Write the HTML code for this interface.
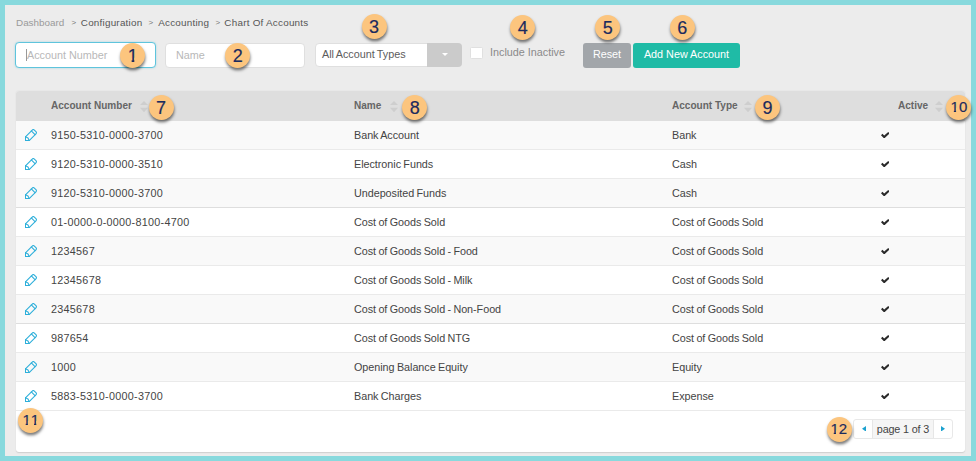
<!DOCTYPE html>
<html lang="en">
<head>
<meta charset="utf-8">
<title>Chart Of Accounts</title>
<style>
*{box-sizing:border-box}
html,body{margin:0;padding:0}
body{width:976px;height:461px;overflow:hidden;position:relative;background:#88d9dd;font-family:"Liberation Sans",sans-serif;font-size:10.8px;color:#444}
.page{position:absolute;left:5px;top:5px;width:966px;height:451px;background:#ececec}
.abs{position:absolute;white-space:nowrap}
.crumb{left:16px;top:16px;height:14px;line-height:14px;font-size:9.9px;color:#555}
.crumb .first{color:#9a9a9a}
.crumb span{position:absolute;top:0}
.crumb .sep{color:#777;font-size:8px}
.inp{height:25px;border:1px solid #dfdfdf;border-radius:4px;background:#fff;line-height:23px;padding-left:10px;color:#b8b8b8;top:42.5px}
.inp.focus{border-color:#5ec4dc;box-shadow:0 0 2px rgba(94,196,220,.55);top:42px;height:26px;line-height:24px;padding-left:11px}
.caret{position:absolute;left:9.5px;top:6px;width:1.4px;height:12.4px;background:#999}
.sel{left:315px;top:42.5px;width:146.8px;height:24.5px;border-radius:4px;background:#fff;border:1px solid #dfdfdf;line-height:21.5px;padding-left:6px;color:#5c5c5c;word-spacing:-.7px}
.sel .arrow{position:absolute;right:-1px;top:-1px;width:34.5px;height:24.5px;background:#cbcbcb;border-radius:0 4px 4px 0}
.sel .arrow:after{content:"";position:absolute;left:14.4px;top:10.7px;border-left:3.5px solid transparent;border-right:3.5px solid transparent;border-top:3.8px solid #fff}
.cb{left:470px;top:47px;width:12.5px;height:12px;background:#fff;border:1px solid #e0e0e0;border-radius:1.5px}
.cbl{left:490px;top:45px;line-height:14px;color:#8a8a8a}
.btn{top:42.5px;height:25px;line-height:23.6px;border-radius:3px;color:#fff;text-align:center}
.reset{left:583px;width:48px;background:#a2a6aa}
.add{left:633px;width:107px;background:#1fbba6}
.card{left:16px;top:91px;width:949px;height:360.6px;background:#fff;border-radius:3px;box-shadow:0 .5px 1.2px rgba(0,0,0,.13);overflow:hidden}
table{border-collapse:separate;border-spacing:0;width:949px;table-layout:fixed}
th{height:30px;background:#dedede;text-align:left;font-weight:700;color:#666;padding:0 0 2px 0;font-size:10.8px;vertical-align:middle}
td{height:29px;padding:0;border-bottom:1px solid #eaeaea;vertical-align:middle;word-spacing:-.6px;letter-spacing:-.04px}
tbody tr:nth-child(odd) td{background:#f9f9f9}
tbody tr:nth-child(3) td,tbody tr:nth-child(7) td{border-bottom-color:#dedede}
.c0{width:35px;padding-left:9px}
.c1{width:303px}
.c2{width:318px}
.c3{width:208px}
.c4{width:85px}
th .h{display:inline-block;transform-origin:0 50%;transform:scaleX(.93)}
.num{letter-spacing:.27px}
.pen{display:block}
.pen path{fill:none;stroke:#2dafda;stroke-width:1.08;stroke-linejoin:round;stroke-linecap:round}
.chk{display:block;margin-left:.7px}
.chk path{fill:#2b2b2b}
.srt{position:absolute}
.srt path{fill:#cecece}
.pager{left:853.4px;top:419px;width:100.1px;height:19.5px;border:1px solid #e8e8e8;border-radius:3px;background:#fff}
.pager .mid{position:absolute;left:17.2px;top:0;width:62px;height:17.5px;background:#f5f5f5;border-left:1px solid #e6e6e6;border-right:1px solid #e6e6e6;line-height:19.4px;text-align:center;color:#444;letter-spacing:-.15px;padding-left:.8px}
.pager svg{position:absolute;top:5.9px;fill:#1ba1cf}
.bdg{position:absolute;width:25px;height:25px;border-radius:50%;background:#fcc57e;color:#1b2b5e;font-size:18px;line-height:26.4px;text-align:center;box-shadow:.4px 2.3px 3px rgba(0,0,0,.52);-webkit-text-stroke:.18px #1b2b5e}
.bdg.two{font-size:15px;letter-spacing:0;line-height:24.4px;text-indent:-.6px}
.o{display:inline-block;line-height:1;text-indent:0;clip-path:polygon(0 0,100% 0,100% .62em,.37em .62em,.37em 100%,.22em 100%,.22em .62em,0 .62em)}
</style>
</head>
<body>
<div class="page"></div>

<div class="abs crumb"><span class="first" style="left:0">Dashboard</span><span class="sep" style="left:55.5px">&gt;</span><span style="left:64.8px;letter-spacing:.22px">Configuration</span><span class="sep" style="left:132.5px">&gt;</span><span style="left:142.3px;letter-spacing:.2px">Accounting</span><span class="sep" style="left:199.5px">&gt;</span><span style="left:208.3px;letter-spacing:.24px">Chart Of Accounts</span></div>

<div class="abs inp focus" style="left:15px;width:141px"><i class="caret"></i>Account Number</div>
<div class="abs inp" style="left:165px;width:139.5px">Name</div>
<div class="abs sel">All Account Types<span class="arrow"></span></div>
<div class="abs cb"></div>
<div class="abs cbl">Include Inactive</div>
<div class="abs btn reset">Reset</div>
<div class="abs btn add">Add New Account</div>

<div class="abs card">
<table>
<thead><tr><th class="c0"></th><th class="c1"><span class="h">Account Number</span></th><th class="c2"><span class="h">Name</span></th><th class="c3"><span class="h">Account Type</span></th><th class="c4" style="padding-left:18px"><span class="h">Active</span></th></tr></thead>
<tbody>
<tr><td class="c0"><svg class="pen" viewBox="0 0 12 12" width="12" height="12"><path d="M0.45 11.55 L4.15 11.55 L10.93 4.77 Q11.99 3.71 10.93 2.65 L9.35 1.07 Q8.29 0.01 7.23 1.07 L0.45 7.85 Z"/><path d="M10.01 5.69 L6.31 1.99"/><path d="M0.45 7.85 L3.01 8.99 L4.15 11.55"/></svg></td><td class="c1"><span class="num">9150-5310-0000-3700</span></td><td class="c2">Bank Account</td><td class="c3">Bank</td><td class="c4"><svg class="chk" viewBox="0 0 8.7 6.5" width="8.7" height="6.5"><path d="M0 3.3 L1.45 1.85 L3.2 3.6 L7.25 0 L8.7 1.45 L3.2 6.5 Z"/></svg></td></tr>
<tr><td class="c0"><svg class="pen" viewBox="0 0 12 12" width="12" height="12"><path d="M0.45 11.55 L4.15 11.55 L10.93 4.77 Q11.99 3.71 10.93 2.65 L9.35 1.07 Q8.29 0.01 7.23 1.07 L0.45 7.85 Z"/><path d="M10.01 5.69 L6.31 1.99"/><path d="M0.45 7.85 L3.01 8.99 L4.15 11.55"/></svg></td><td class="c1"><span class="num">9120-5310-0000-3510</span></td><td class="c2">Electronic Funds</td><td class="c3">Cash</td><td class="c4"><svg class="chk" viewBox="0 0 8.7 6.5" width="8.7" height="6.5"><path d="M0 3.3 L1.45 1.85 L3.2 3.6 L7.25 0 L8.7 1.45 L3.2 6.5 Z"/></svg></td></tr>
<tr><td class="c0"><svg class="pen" viewBox="0 0 12 12" width="12" height="12"><path d="M0.45 11.55 L4.15 11.55 L10.93 4.77 Q11.99 3.71 10.93 2.65 L9.35 1.07 Q8.29 0.01 7.23 1.07 L0.45 7.85 Z"/><path d="M10.01 5.69 L6.31 1.99"/><path d="M0.45 7.85 L3.01 8.99 L4.15 11.55"/></svg></td><td class="c1"><span class="num">9120-5310-0000-3700</span></td><td class="c2">Undeposited Funds</td><td class="c3">Cash</td><td class="c4"><svg class="chk" viewBox="0 0 8.7 6.5" width="8.7" height="6.5"><path d="M0 3.3 L1.45 1.85 L3.2 3.6 L7.25 0 L8.7 1.45 L3.2 6.5 Z"/></svg></td></tr>
<tr><td class="c0"><svg class="pen" viewBox="0 0 12 12" width="12" height="12"><path d="M0.45 11.55 L4.15 11.55 L10.93 4.77 Q11.99 3.71 10.93 2.65 L9.35 1.07 Q8.29 0.01 7.23 1.07 L0.45 7.85 Z"/><path d="M10.01 5.69 L6.31 1.99"/><path d="M0.45 7.85 L3.01 8.99 L4.15 11.55"/></svg></td><td class="c1"><span class="num">01-0000-0-0000-8100-4700</span></td><td class="c2">Cost of Goods Sold</td><td class="c3">Cost of Goods Sold</td><td class="c4"><svg class="chk" viewBox="0 0 8.7 6.5" width="8.7" height="6.5"><path d="M0 3.3 L1.45 1.85 L3.2 3.6 L7.25 0 L8.7 1.45 L3.2 6.5 Z"/></svg></td></tr>
<tr><td class="c0"><svg class="pen" viewBox="0 0 12 12" width="12" height="12"><path d="M0.45 11.55 L4.15 11.55 L10.93 4.77 Q11.99 3.71 10.93 2.65 L9.35 1.07 Q8.29 0.01 7.23 1.07 L0.45 7.85 Z"/><path d="M10.01 5.69 L6.31 1.99"/><path d="M0.45 7.85 L3.01 8.99 L4.15 11.55"/></svg></td><td class="c1"><span class="num">1234567</span></td><td class="c2">Cost of Goods Sold - Food</td><td class="c3">Cost of Goods Sold</td><td class="c4"><svg class="chk" viewBox="0 0 8.7 6.5" width="8.7" height="6.5"><path d="M0 3.3 L1.45 1.85 L3.2 3.6 L7.25 0 L8.7 1.45 L3.2 6.5 Z"/></svg></td></tr>
<tr><td class="c0"><svg class="pen" viewBox="0 0 12 12" width="12" height="12"><path d="M0.45 11.55 L4.15 11.55 L10.93 4.77 Q11.99 3.71 10.93 2.65 L9.35 1.07 Q8.29 0.01 7.23 1.07 L0.45 7.85 Z"/><path d="M10.01 5.69 L6.31 1.99"/><path d="M0.45 7.85 L3.01 8.99 L4.15 11.55"/></svg></td><td class="c1"><span class="num">12345678</span></td><td class="c2">Cost of Goods Sold - Milk</td><td class="c3">Cost of Goods Sold</td><td class="c4"><svg class="chk" viewBox="0 0 8.7 6.5" width="8.7" height="6.5"><path d="M0 3.3 L1.45 1.85 L3.2 3.6 L7.25 0 L8.7 1.45 L3.2 6.5 Z"/></svg></td></tr>
<tr><td class="c0"><svg class="pen" viewBox="0 0 12 12" width="12" height="12"><path d="M0.45 11.55 L4.15 11.55 L10.93 4.77 Q11.99 3.71 10.93 2.65 L9.35 1.07 Q8.29 0.01 7.23 1.07 L0.45 7.85 Z"/><path d="M10.01 5.69 L6.31 1.99"/><path d="M0.45 7.85 L3.01 8.99 L4.15 11.55"/></svg></td><td class="c1"><span class="num">2345678</span></td><td class="c2">Cost of Goods Sold - Non-Food</td><td class="c3">Cost of Goods Sold</td><td class="c4"><svg class="chk" viewBox="0 0 8.7 6.5" width="8.7" height="6.5"><path d="M0 3.3 L1.45 1.85 L3.2 3.6 L7.25 0 L8.7 1.45 L3.2 6.5 Z"/></svg></td></tr>
<tr><td class="c0"><svg class="pen" viewBox="0 0 12 12" width="12" height="12"><path d="M0.45 11.55 L4.15 11.55 L10.93 4.77 Q11.99 3.71 10.93 2.65 L9.35 1.07 Q8.29 0.01 7.23 1.07 L0.45 7.85 Z"/><path d="M10.01 5.69 L6.31 1.99"/><path d="M0.45 7.85 L3.01 8.99 L4.15 11.55"/></svg></td><td class="c1"><span class="num">987654</span></td><td class="c2">Cost of Goods Sold NTG</td><td class="c3">Cost of Goods Sold</td><td class="c4"><svg class="chk" viewBox="0 0 8.7 6.5" width="8.7" height="6.5"><path d="M0 3.3 L1.45 1.85 L3.2 3.6 L7.25 0 L8.7 1.45 L3.2 6.5 Z"/></svg></td></tr>
<tr><td class="c0"><svg class="pen" viewBox="0 0 12 12" width="12" height="12"><path d="M0.45 11.55 L4.15 11.55 L10.93 4.77 Q11.99 3.71 10.93 2.65 L9.35 1.07 Q8.29 0.01 7.23 1.07 L0.45 7.85 Z"/><path d="M10.01 5.69 L6.31 1.99"/><path d="M0.45 7.85 L3.01 8.99 L4.15 11.55"/></svg></td><td class="c1"><span class="num">1000</span></td><td class="c2">Opening Balance Equity</td><td class="c3">Equity</td><td class="c4"><svg class="chk" viewBox="0 0 8.7 6.5" width="8.7" height="6.5"><path d="M0 3.3 L1.45 1.85 L3.2 3.6 L7.25 0 L8.7 1.45 L3.2 6.5 Z"/></svg></td></tr>
<tr><td class="c0"><svg class="pen" viewBox="0 0 12 12" width="12" height="12"><path d="M0.45 11.55 L4.15 11.55 L10.93 4.77 Q11.99 3.71 10.93 2.65 L9.35 1.07 Q8.29 0.01 7.23 1.07 L0.45 7.85 Z"/><path d="M10.01 5.69 L6.31 1.99"/><path d="M0.45 7.85 L3.01 8.99 L4.15 11.55"/></svg></td><td class="c1"><span class="num">5883-5310-0000-3700</span></td><td class="c2">Bank Charges</td><td class="c3">Expense</td><td class="c4"><svg class="chk" viewBox="0 0 8.7 6.5" width="8.7" height="6.5"><path d="M0 3.3 L1.45 1.85 L3.2 3.6 L7.25 0 L8.7 1.45 L3.2 6.5 Z"/></svg></td></tr>
</tbody>
</table>
</div>
<div class="abs" style="left:139.7px;top:100.8px;width:8px;height:12px"><svg class="srt" viewBox="0 0 8 11.3" width="8" height="11.3"><path d="M4 0 L8 4.1 H0 Z"/><path d="M0 6.8 H8 L4 11.3 Z"/></svg></div>
<div class="abs" style="left:389.7px;top:100.8px;width:8px;height:12px"><svg class="srt" viewBox="0 0 8 11.3" width="8" height="11.3"><path d="M4 0 L8 4.1 H0 Z"/><path d="M0 6.8 H8 L4 11.3 Z"/></svg></div>
<div class="abs" style="left:743.9px;top:100.8px;width:8px;height:12px"><svg class="srt" viewBox="0 0 8 11.3" width="8" height="11.3"><path d="M4 0 L8 4.1 H0 Z"/><path d="M0 6.8 H8 L4 11.3 Z"/></svg></div>
<div class="abs" style="left:935.4px;top:100.8px;width:8px;height:12px"><svg class="srt" viewBox="0 0 8 11.3" width="8" height="11.3"><path d="M4 0 L8 4.1 H0 Z"/><path d="M0 6.8 H8 L4 11.3 Z"/></svg></div>

<div class="abs pager"><svg style="left:7.5px" width="4" height="5.6" viewBox="0 0 4 5.6"><path d="M4 0 V5.6 L0 2.8 Z"/></svg><span class="mid">page 1 of 3</span><svg style="left:87.1px" width="4" height="5.6" viewBox="0 0 4 5.6"><path d="M0 0 L4 2.8 L0 5.6 Z"/></svg></div>

<div class="bdg" style="left:120.2px;top:42.5px"><span class="o">1</span></div>
<div class="bdg" style="left:225.2px;top:42.5px">2</div>
<div class="bdg" style="left:361.6px;top:14.3px">3</div>
<div class="bdg" style="left:510.2px;top:14.5px">4</div>
<div class="bdg" style="left:595.2px;top:14.5px">5</div>
<div class="bdg" style="left:669.7px;top:14.5px">6</div>
<div class="bdg" style="left:148.5px;top:94.8px">7</div>
<div class="bdg" style="left:402.3px;top:94.8px">8</div>
<div class="bdg" style="left:755.1px;top:94.8px">9</div>
<div class="bdg two" style="left:946.4px;top:94.5px;text-indent:0"><span class="o">1</span>0</div>
<div class="bdg two" style="left:17.8px;top:407.8px;text-indent:.9px"><span class="o">1</span><span class="o">1</span></div>
<div class="bdg two" style="left:826.6px;top:417.0px"><span class="o">1</span>2</div>
</body>
</html>
